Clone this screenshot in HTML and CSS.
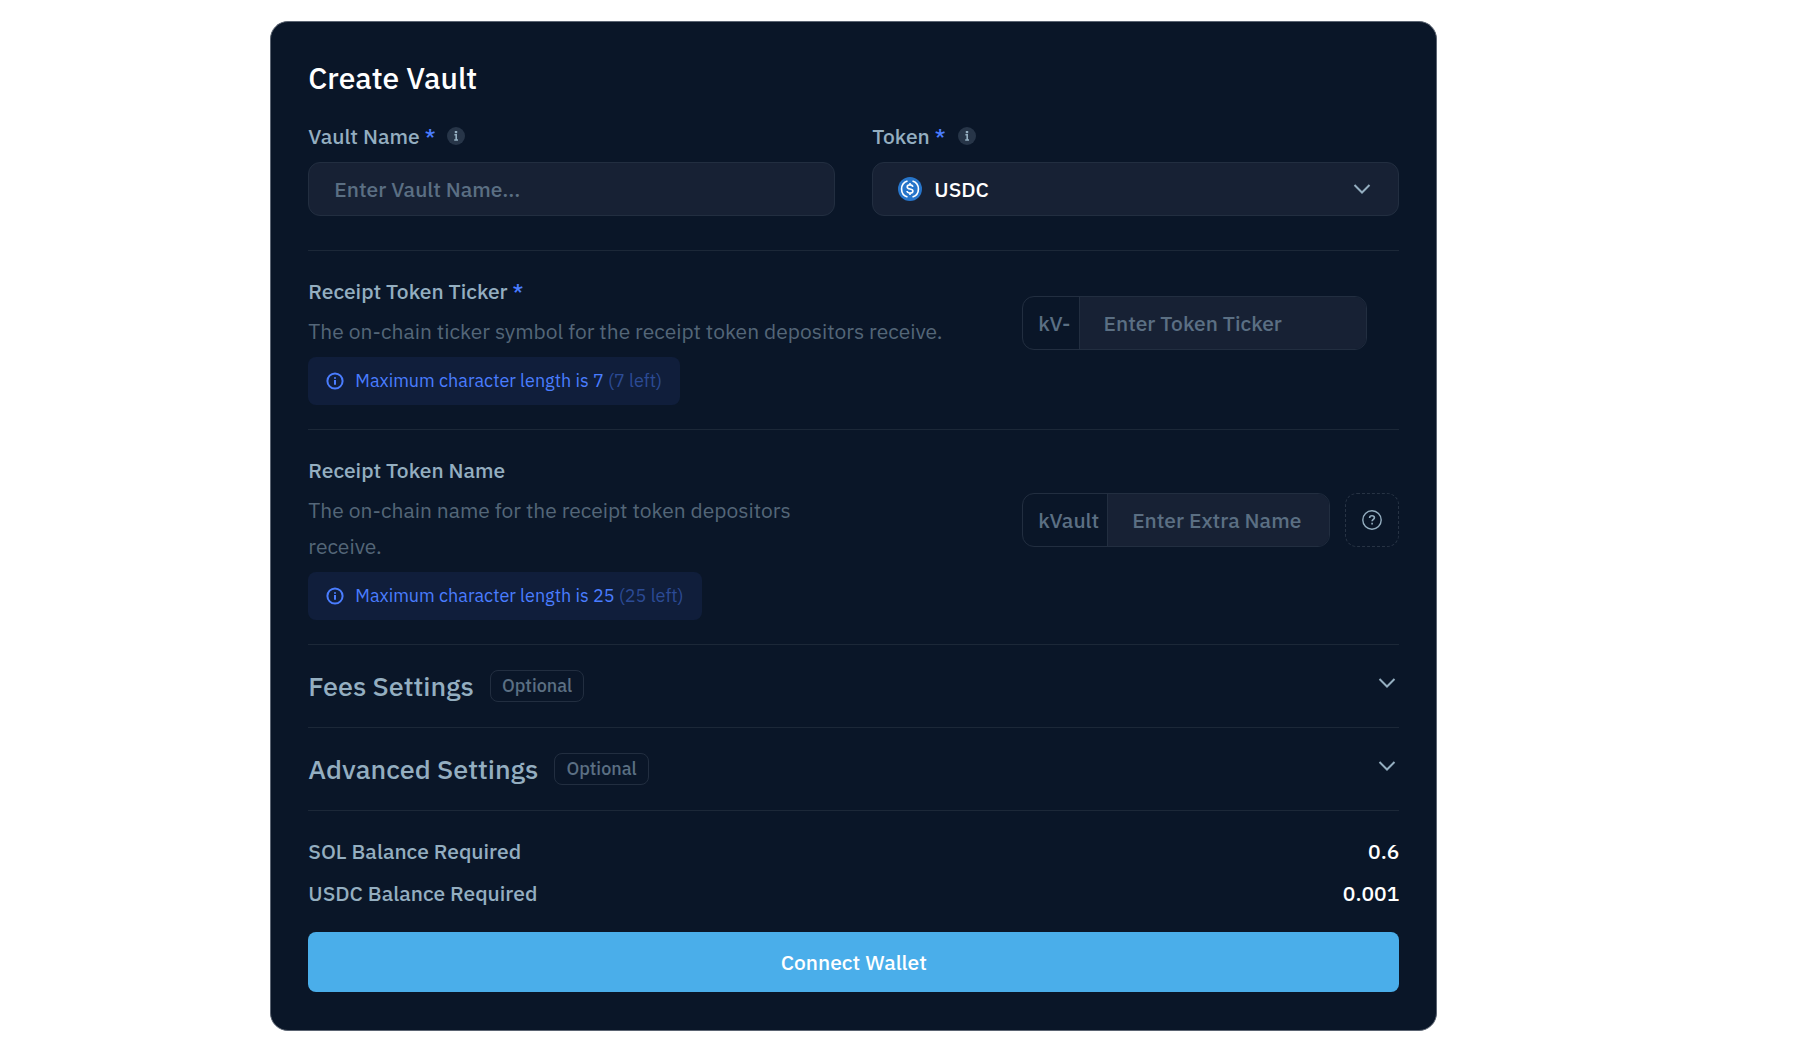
FILE: index.html
```html
<!DOCTYPE html>
<html lang="en">
<head>
    <meta charset="UTF-8">
    <meta name="viewport" content="width=device-width, initial-scale=1.0">
    <title>Create Vault</title>
    <link rel="stylesheet" href="styles.css">
</head>
<body>
    <form class="card">
        <h1>Create Vault</h1>

        <div class="fields">
            <div class="field">
                <div class="label-row">
                    <label for="vault-name">Vault Name <span class="required">*</span></label>
                    <svg class="info-dot" viewBox="0 0 18 18" aria-hidden="true">
                        <circle cx="9" cy="9" r="9" fill="#273548"/>
                        <path d="M7.4 7.8h1.800v5M7.200 13h3.800" fill="none" stroke="#94aec0" stroke-width="1.600"/>
                        <rect x="7.800" y="4" width="2.400" height="2.200" fill="#94aec0"/>
                    </svg>
                </div>
                <input class="box" type="text" id="vault-name" placeholder="Enter Vault Name...">
            </div>
            <div class="field">
                <div class="label-row">
                    <label for="token">Token <span class="required">*</span></label>
                    <svg class="info-dot" viewBox="0 0 18 18" aria-hidden="true">
                        <circle cx="9" cy="9" r="9" fill="#273548"/>
                        <path d="M7.4 7.8h1.800v5M7.200 13h3.800" fill="none" stroke="#94aec0" stroke-width="1.600"/>
                        <rect x="7.800" y="4" width="2.400" height="2.200" fill="#94aec0"/>
                    </svg>
                </div>
                <div class="select-wrap">
                    <select class="box" id="token">
                        <option>USDC</option>
                    </select>
                    <svg class="coin" viewBox="0 0 24 24" aria-hidden="true">
                        <circle cx="12" cy="12" r="12" fill="#2775ca"/>
                        <g fill="none" stroke="#fff" stroke-width="1.600">
                            <path d="M9.500 3.900a8.500 8.500 0 0 0 0 16.200M14.500 3.900a8.500 8.500 0 0 1 0 16.200"/>
                            <path d="M14.800 9.900c-.2-1.300-1.200-2-2.800-2s-2.800.7-2.800 2c0 2.900 5.700 1.300 5.700 4.100 0 1.300-1.200 2.100-2.900 2.100s-2.800-.8-3-2.100M12 6v2M12 16v2"/>
                        </g>
                    </svg>
                    <svg class="chevron select-chevron" viewBox="0 0 18 18" aria-hidden="true"><path d="M1.500 5 9 12.500 16.500 5"/></svg>
                </div>
            </div>
        </div>

        <div class="setting">
            <div class="setting-text">
                <label for="ticker">Receipt Token Ticker <span class="required">*</span></label>
                <p>The on-chain ticker symbol for the receipt token depositors receive.</p>
                <div class="hint">
                    <svg class="hint-icon" viewBox="0 0 18 18" aria-hidden="true">
                        <circle cx="9" cy="9" r="7.600"/>
                        <path d="M9 8v4.800M9 5.200v1.600"/>
                    </svg>
                    <span>Maximum character length is 7 <span class="left">(7 left)</span></span>
                </div>
            </div>
            <div class="control">
                <div class="group ticker">
                    <span class="prefix">kV-</span>
                    <input type="text" id="ticker" maxlength="7" placeholder="Enter Token Ticker">
                </div>
            </div>
        </div>

        <div class="setting">
            <div class="setting-text narrow">
                <label for="extra-name">Receipt Token Name</label>
                <p>The on-chain name for the receipt token depositors receive.</p>
                <div class="hint">
                    <svg class="hint-icon" viewBox="0 0 18 18" aria-hidden="true">
                        <circle cx="9" cy="9" r="7.600"/>
                        <path d="M9 8v4.800M9 5.200v1.600"/>
                    </svg>
                    <span>Maximum character length is 25 <span class="left">(25 left)</span></span>
                </div>
            </div>
            <div class="control">
                <div class="group">
                    <span class="prefix">kVault</span>
                    <input type="text" id="extra-name" maxlength="25" placeholder="Enter Extra Name">
                </div>
                <button type="button" class="help" aria-label="Help">
                    <svg viewBox="0 0 20 20" aria-hidden="true">
                        <circle cx="10" cy="10" r="9.200" stroke-width="1.400"/>
                        <path d="M7.600 7.900c0-1.400 1-2.200 2.400-2.200s2.400.8 2.400 2c0 1.700-2.300 1.700-2.300 3.600M10.100 12.800v1.800" stroke-width="1.600"/>
                    </svg>
                </button>
            </div>
        </div>

        <button type="button" class="section" aria-expanded="false">
            <span class="section-title">Fees Settings</span>
            <span class="badge">Optional</span>
            <svg class="chevron" viewBox="0 0 18 18" aria-hidden="true"><path d="M1.500 5 9 12.500 16.500 5"/></svg>
        </button>
        <button type="button" class="section" aria-expanded="false">
            <span class="section-title">Advanced Settings</span>
            <span class="badge">Optional</span>
            <svg class="chevron" viewBox="0 0 18 18" aria-hidden="true"><path d="M1.500 5 9 12.500 16.500 5"/></svg>
        </button>

        <dl class="balances">
            <div>
                <dt>SOL Balance Required</dt>
                <dd>0.6</dd>
            </div>
            <div>
                <dt>USDC Balance Required</dt>
                <dd>0.001</dd>
            </div>
        </dl>

        <button type="submit" class="connect">Connect Wallet</button>
    </form>
</body>
</html>
```
FILE: styles.css
```css
* {
    box-sizing: border-box;
}
body {
    margin: 0;
    padding: 21px 0 20px;
    background: #fff;
    color: #94aec0;
    font-family: "IBM Plex Sans", Roboto, sans-serif;
    font-size: 21px;
    font-weight: 500;
    line-height: 36px;
}
input,
select,
button {
    font: inherit;
    color: inherit;
}
button {
    cursor: pointer;
}
.card {
    max-width: 1167px;
    margin-left: 15%;
    padding: 36px 37px 38px;
    background: #0a1628;
    border: 1px solid #5b6472;
    border-radius: 18px;
}
h1 {
    margin: 0 0 20px;
    color: #fff;
    font-size: 30px;
    font-weight: 500;
    line-height: 40px;
}
.required {
    color: #4a7dff;
}

/* Name and token */
.fields {
    display: grid;
    grid-template-columns: 1fr 1fr;
    gap: 37px;
    padding-bottom: 34px;
}
.label-row {
    display: flex;
    align-items: center;
    gap: 12px;
    margin-bottom: 8px;
}
.info-dot {
    width: 18px;
    height: 18px;
}
.box {
    display: block;
    width: 100%;
    height: 54px;
    padding: 0 25px;
    background: #172134;
    border: 1px solid #222e40;
    border-radius: 12px;
}
input {
    outline: none;
}
input::placeholder {
    color: #5b6f83;
    opacity: 1;
}
.select-wrap {
    position: relative;
}
select.box {
    appearance: none;
    padding-left: 61px;
    color: #fff;
}
.coin {
    position: absolute;
    left: 26px;
    top: 15px;
    width: 24px;
    height: 24px;
    pointer-events: none;
}
.chevron {
    width: 18px;
    height: 18px;
    fill: none;
    stroke: #94aec0;
    stroke-width: 2;
}
.select-chevron {
    position: absolute;
    right: 28px;
    top: 18px;
    pointer-events: none;
}

/* Receipt token rows */
.setting {
    display: flex;
    align-items: center;
    justify-content: space-between;
    padding: 22px 0 24px;
    border-top: 1px solid #1c2838;
}
.setting-text.narrow {
    max-width: 520px;
}
.setting-text label {
    display: block;
    margin-bottom: 4px;
}
.setting-text p {
    margin: 0 0 8px;
    color: #546678;
    font-weight: 400;
}
.hint {
    display: inline-flex;
    align-items: center;
    gap: 11px;
    height: 48px;
    padding: 0 18px;
    background: #101e3b;
    border-radius: 8px;
    color: #4a7dff;
    font-size: 18px;
    font-weight: 400;
    vertical-align: top;
}
.hint-icon {
    width: 18px;
    height: 18px;
    fill: none;
    stroke: #4a7dff;
    stroke-width: 2;
}
.left {
    color: #2c4b95;
}
.control {
    display: flex;
    gap: 15px;
    flex: 0 0 377px;
    min-width: 0;
    padding-bottom: 32px;
}
.group {
    display: flex;
    flex: 1;
    min-width: 0;
    height: 54px;
    overflow: hidden;
    border: 1px solid #222e40;
    border-radius: 12px;
}
.group.ticker {
    margin-right: 32px;
}
.prefix {
    padding: 0 8px 0 15px;
    color: #5b6f83;
    line-height: 52px;
}
.group input {
    flex: 1;
    min-width: 0;
    padding: 0 24px;
    background: #172134;
    border: 0;
    border-left: 1px solid #222e40;
}
.help {
    display: flex;
    align-items: center;
    justify-content: center;
    width: 54px;
    height: 54px;
    padding: 0;
    background: none;
    border: 1px dashed #273344;
    border-radius: 12px;
}
.help svg {
    width: 20px;
    height: 20px;
    fill: none;
    stroke: #94aec0;
}

/* Collapsed sections */
.section {
    display: flex;
    align-items: center;
    gap: 16px;
    width: 100%;
    height: 83px;
    padding: 0 3px 0 0;
    background: none;
    border: 0;
    border-top: 1px solid #1c2838;
    text-align: left;
}
.section-title {
    font-size: 27px;
}
.badge {
    padding: 0 11px;
    border: 1px solid #222e40;
    border-radius: 8px;
    color: #5b6f83;
    font-size: 18px;
    line-height: 30px;
}
.section .chevron {
    margin: 0 0 6px auto;
}

/* Balances */
.balances {
    margin: 0;
    padding: 22px 0 21px;
    border-top: 1px solid #1c2838;
}
.balances div {
    display: flex;
    justify-content: space-between;
}
.balances div + div {
    margin-top: 6px;
}
.balances dd {
    margin: 0;
    color: #fff;
}
.connect {
    display: block;
    width: 100%;
    height: 60px;
    background: #4aaeea;
    border: 0;
    border-radius: 8px;
    color: #fff;
}
.connect:hover {
    background: #3b9fdb;
}
```
